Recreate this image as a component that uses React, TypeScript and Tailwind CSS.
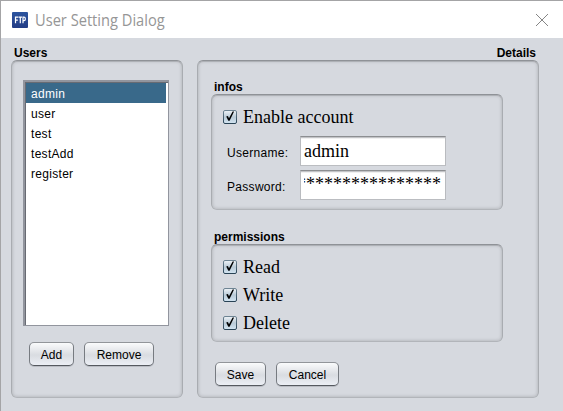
import type { ReactNode } from "react";

const users = ["admin", "user", "test", "testAdd", "register"];

function Panel({ className = "", children }: { className?: string; children: ReactNode }) {
  return (
    <div
      className={`rounded-[6px] border border-x-[#a9acb1] border-t-[#8f9297] border-b-[#b2b5ba] shadow-[inset_0_1px_0_#aeb1b6,inset_0_0_3px_1px_rgba(0,0,0,0.13)] ${className}`}
    >
      {children}
    </div>
  );
}

function Button({ className = "", children }: { className?: string; children: ReactNode }) {
  return (
    <button
      className={`h-6 rounded-[5px] border border-x-[#777b81] border-t-[#92959a] border-b-[#55595f] bg-linear-to-b from-[#fafbfc] via-[#d9dce1] via-55% to-[#eceff5] pt-px text-center text-[12px] leading-[22px] shadow-[0_1px_0_#b9bcc3] ${className}`}
    >
      {children}
    </button>
  );
}

function Check({ label, className = "" }: { label: string; className?: string }) {
  return (
    <label className="flex h-7 items-center">
      <svg width="14" height="14" viewBox="0 0 14 14" className="shrink-0">
        <defs>
          <linearGradient id="box" x1="0" y1="0" x2="0" y2="1">
            <stop offset="0" stopColor="#f0f4f8" />
            <stop offset="0.5" stopColor="#b9cad7" />
            <stop offset="1" stopColor="#d3e5f2" />
          </linearGradient>
          <linearGradient id="edge" x1="0" y1="0" x2="0" y2="1">
            <stop offset="0" stopColor="#6e8493" />
            <stop offset="1" stopColor="#294355" />
          </linearGradient>
        </defs>
        <rect x="0.5" y="0.5" width="13" height="13" rx="1.5" fill="url(#box)" stroke="url(#edge)" />
        <path d="M3.2 6.6 L4.9 6 L6 8.2 L9.6 1.6 L11.1 1.6 L6.6 10.8 L5.3 10.8 Z" fill="#000" />
      </svg>
      <span className={`ml-[6px] font-['Liberation_Serif',serif] text-[18px] leading-5 ${className}`}>{label}</span>
    </label>
  );
}

function Field({ children }: { children: ReactNode }) {
  return (
    <div className="flex h-[30px] w-[146px] overflow-hidden border border-x-[#b9bbbf] border-t-[#8c8e91] border-b-[#bbbdc1] bg-white pr-1 pl-[3px] font-['Liberation_Serif',serif] text-[18px] leading-7 shadow-[inset_0_1px_0_#c3c4c7,inset_0_2px_0_#f0f0f0]">
      {children}
    </div>
  );
}

export default function App() {
  return (
    <div className="flex h-[411px] w-[563px] flex-col overflow-hidden border-t border-l border-[#a4a4a6] bg-[#d6d9df] font-['Liberation_Sans',Arial,sans-serif] text-[12px] text-black">
      <header className="flex h-[37px] shrink-0 items-center bg-white pl-[11px]">
        <div className="flex h-4 w-4 items-center justify-center rounded-[1px] bg-linear-to-b from-[#2c549f] to-[#233c85]">
          <svg width="16" height="16" viewBox="0 0 16 16" fill="none" stroke="#fff" strokeWidth="1.2">
            <path d="M3.5 11.2V5.2H6.2M3.5 8.1H5.8M6.6 5.2H10M8.3 5.2V11.2M11 11.2V5.2H12C13.8 5.2 13.8 8.6 12 8.6H11" />
          </svg>
        </div>
        <h1 className="ml-[7px] origin-left scale-x-[0.915] font-['Open_Sans',sans-serif] text-[16px] leading-5 whitespace-nowrap text-[#969696]">
          User Setting Dialog
        </h1>
        <svg width="12" height="12" viewBox="0 0 12 12" className="mr-[15px] ml-auto" stroke="#858585" strokeWidth="1">
          <path d="M0 0L12 12M12 0L0 12" />
        </svg>
      </header>

      <main className="flex pl-[10px]">
        <section className="w-[172px]">
          <h2 className="h-[22px] pt-[7px] pl-[3px] leading-4 font-bold">Users</h2>
          <Panel className="h-[338px] pt-[19px] pl-[11px]">
            <ul className="h-[246px] w-[146px] border-2 border-r border-b border-[#92959e] bg-white pt-px pr-[2px] pl-px tracking-[0.3px] shadow-[inset_1px_1px_0_#686b73]">
              {users.map((user, i) => (
                <li key={user} className={`h-5 pl-[5px] leading-[22px] ${i === 0 ? "bg-[#39698a] text-white" : ""}`}>
                  {user}
                </li>
              ))}
            </ul>
            <div className="mt-4 ml-[6px] flex gap-[10px]">
              <Button className="w-[45px]">Add</Button>
              <Button className="w-[70px]">Remove</Button>
            </div>
          </Panel>
        </section>

        <section className="ml-[14px] w-[342px]">
          <h2 className="h-[22px] pt-[7px] pr-[3px] text-right leading-4 font-bold">Details</h2>
          <Panel className="h-[338px] pt-[17px] pl-[13px]">
            <h3 className="h-4 pl-[3px] leading-[18px] font-bold">infos</h3>
            <Panel className="h-[116px] w-[292px] pt-[8px] pl-[11px]">
              <Check label="Enable account" />
              <div className="mt-[5px] flex items-center">
                <span className="w-[77px] pt-[3px] pl-1 tracking-[0.3px]">Username:</span>
                <Field>admin</Field>
              </div>
              <div className="mt-1 flex items-center">
                <span className="w-[77px] pt-[3px] pl-1 tracking-[0.3px]">Password:</span>
                <Field>
                  <div className="flex w-full justify-end overflow-hidden">
                    <span className="leading-[26px]">****************</span>
                  </div>
                </Field>
              </div>
            </Panel>
            <h3 className="mt-[18px] h-4 pl-[3px] leading-[18px] font-bold">permissions</h3>
            <Panel className="h-[98px] w-[292px] pt-[8px] pl-[11px]">
              <Check label="Read" />
              <Check label="Write" />
              <Check label="Delete" />
            </Panel>
            <div className="mt-5 ml-1 flex gap-[10px]">
              <Button className="w-[51px]">Save</Button>
              <Button className="w-[63px]">Cancel</Button>
            </div>
          </Panel>
        </section>
      </main>
    </div>
  );
}
